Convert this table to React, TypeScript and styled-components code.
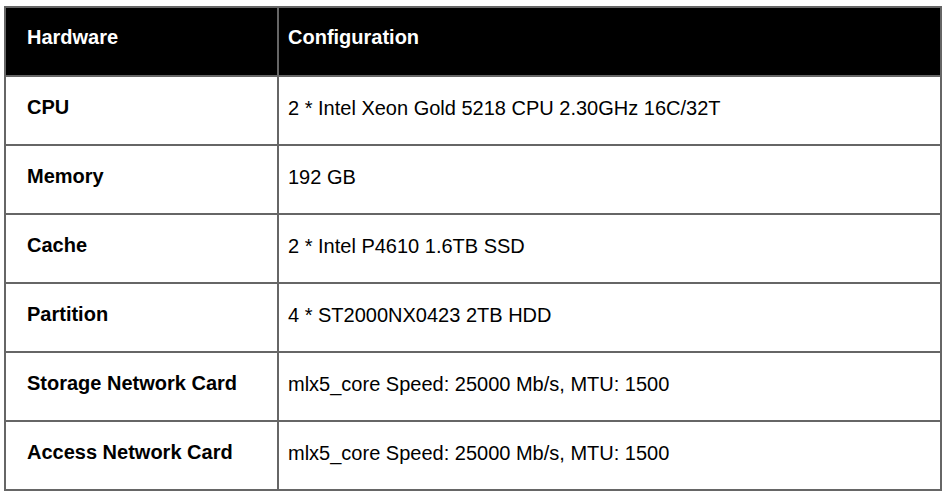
import React from "react";
import styled, { createGlobalStyle } from "styled-components";

const GlobalStyle = createGlobalStyle`
  html, body {
    margin: 0;
    padding: 0;
    background: #ffffff;
  }
  body {
    font-family: "Liberation Sans", Arial, sans-serif;
  }
`;

const Page = styled.div`
  padding: 6px 0 0 4px;
`;

const Table = styled.table`
  width: 938px;
  border-collapse: collapse;
  table-layout: fixed;
  border: 2px solid #666666;
  font-family: "Liberation Sans", Arial, sans-serif;
  font-size: 20px;
  line-height: 22px;
  color: #000000;
`;

const Row = styled.tr`
  height: 69px;
`;

const HeadCell = styled.th<{ $first?: boolean }>`
  background: #000000;
  color: #ffffff;
  font-weight: 700;
  text-align: left;
  vertical-align: top;
  border: 2px solid #666666;
  padding: 18px 8px 0 ${(p) => (p.$first ? "21px" : "9px")};
  width: ${(p) => (p.$first ? "242px" : "auto")};
`;

const LabelCell = styled.td`
  font-weight: 700;
  vertical-align: top;
  border: 2px solid #666666;
  padding: 19px 8px 0 21px;
`;

const ValueCell = styled.td`
  font-weight: 400;
  vertical-align: top;
  border: 2px solid #666666;
  padding: 20px 8px 0 9px;
`;

const rows: [string, string][] = [
  ["CPU", "2 * Intel Xeon Gold 5218 CPU 2.30GHz 16C/32T"],
  ["Memory", "192 GB"],
  ["Cache", "2 * Intel P4610 1.6TB SSD"],
  ["Partition", "4 * ST2000NX0423 2TB HDD"],
  ["Storage Network Card", "mlx5_core Speed: 25000 Mb/s, MTU: 1500"],
  ["Access Network Card", "mlx5_core Speed: 25000 Mb/s, MTU: 1500"],
];

export default function App() {
  return (
    <>
      <GlobalStyle />
      <Page>
        <Table>
          <thead>
            <Row>
              <HeadCell $first>Hardware</HeadCell>
              <HeadCell>Configuration</HeadCell>
            </Row>
          </thead>
          <tbody>
            {rows.map(([label, value]) => (
              <Row key={label}>
                <LabelCell>{label}</LabelCell>
                <ValueCell>{value}</ValueCell>
              </Row>
            ))}
          </tbody>
        </Table>
      </Page>
    </>
  );
}
